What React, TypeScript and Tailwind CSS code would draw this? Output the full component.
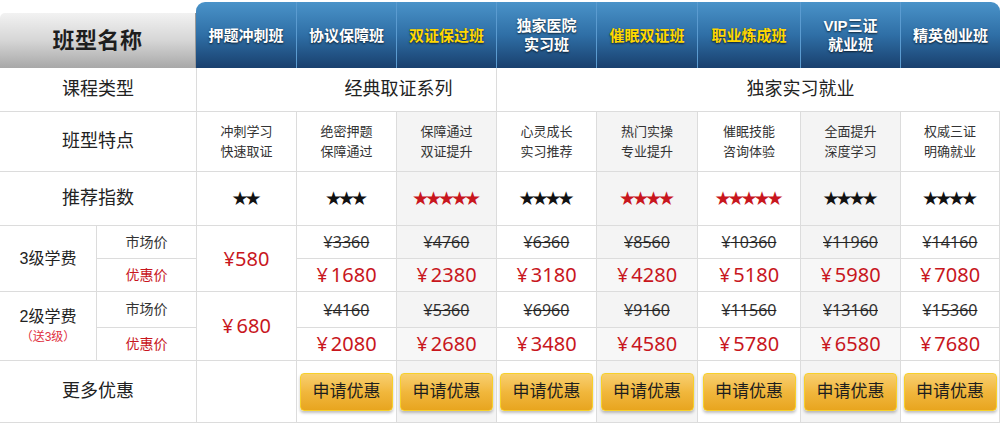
import React from "react";

type Course = {
    name: string[];
    yellow?: boolean;
    feature: string[];
    stars: number;
    redStars?: boolean;
    m3?: string;
    d3?: string;
    m2?: string;
    d2?: string;
    shaded?: boolean;
};

const courses: Course[] = [
    { name: ["押题冲刺班"], feature: ["冲刺学习", "快速取证"], stars: 2 },
    { name: ["协议保障班"], feature: ["绝密押题", "保障通过"], stars: 3, m3: "3360", d3: "1680", m2: "4160", d2: "2080" },
    { name: ["双证保过班"], yellow: true, feature: ["保障通过", "双证提升"], stars: 5, redStars: true, m3: "4760", d3: "2380", m2: "5360", d2: "2680", shaded: true },
    { name: ["独家医院", "实习班"], feature: ["心灵成长", "实习推荐"], stars: 4, m3: "6360", d3: "3180", m2: "6960", d2: "3480" },
    { name: ["催眠双证班"], yellow: true, feature: ["热门实操", "专业提升"], stars: 4, redStars: true, m3: "8560", d3: "4280", m2: "9160", d2: "4580", shaded: true },
    { name: ["职业炼成班"], yellow: true, feature: ["催眠技能", "咨询体验"], stars: 5, redStars: true, m3: "10360", d3: "5180", m2: "11560", d2: "5780" },
    { name: ["VIP三证", "就业班"], feature: ["全面提升", "深度学习"], stars: 4, m3: "11960", d3: "5980", m2: "13160", d2: "6580", shaded: true },
    { name: ["精英创业班"], feature: ["权威三证", "明确就业"], stars: 4, m3: "14160", d3: "7080", m2: "15360", d2: "7680" },
];

const widths = [100, 100, 100, 100, 101, 103, 100, 100];

const cell = "flex items-center justify-center border-r border-b border-[#dcdcdc] text-center";

const Market = ({ v }: { v?: string }) => (
    <span className="text-[16px] text-[#333] line-through decoration-[#222] font-['Noto_Sans','Noto_Sans_CJK_SC',sans-serif]">¥{v}</span>
);

const Deal = ({ v }: { v?: string }) => (
    <span className="text-[20px] text-[#c8161d] font-['Noto_Sans','Noto_Sans_CJK_SC',sans-serif]">
        ¥<span className="ml-[3px]">{v}</span>
    </span>
);

export default function App() {
    return (
        <div className="w-[1000px] h-[424px] bg-white overflow-hidden font-['Liberation_Sans','Noto_Sans_CJK_SC',sans-serif]">
            {/* header */}
            <div className="flex h-[68px]">
                <div className="w-[196px] pt-[13px]">
                    <div className="h-[55px] rounded-tl-[5px] bg-gradient-to-b from-[#f2f2f2] via-[#d6d6d6] to-[#a8a8a8] flex items-center justify-center border-r border-[#999]">
                        <span className="text-[22px] font-bold text-[#1e1e1e] tracking-wide">班型名称</span>
                    </div>
                </div>
                <div className="flex-1 mt-[2px] flex rounded-t-[9px] overflow-hidden bg-gradient-to-b from-[#4a93c9] via-[#2f6fa6] to-[#19406e]">
                    {courses.map((c, i) => (
                        <div
                            key={i}
                            style={{ width: widths[i] }}
                            className={`flex flex-col items-center justify-center text-[15px] font-bold leading-[19px] [text-shadow:0_1px_2px_rgba(0,0,0,0.7)] ${i > 0 ? "border-l border-[#5b9bd0]" : ""} ${c.yellow ? "text-[#ffd800]" : "text-white"}`}
                        >
                            {c.name.map((n) => (
                                <span key={n}>{n}</span>
                            ))}
                        </div>
                    ))}
                </div>
            </div>

            {/* body */}
            <div className="grid grid-cols-[97px_100px_100px_100px_100px_100px_101px_103px_100px_99px] grid-rows-[44px_60px_54px_33px_33px_36px_33px_62px] text-[#222]">
                {/* row: 课程类型 */}
                <div className={`${cell} col-span-2 text-[18px]`}>课程类型</div>
                <div className={`${cell} col-span-3 pl-[104px] text-[18px]`}>经典取证系列</div>
                <div className={`${cell} col-span-5 pl-[104px] text-[18px] border-r-0`}>独家实习就业</div>

                {/* row: 班型特点 */}
                <div className={`${cell} col-span-2 text-[18px]`}>班型特点</div>
                {courses.map((c, i) => (
                    <div key={i} className={`${cell} flex-col text-[13px] leading-[20px] text-[#333] ${c.shaded ? "bg-[#f4f4f4]" : ""}`}>
                        {c.feature.map((f) => (
                            <span key={f}>{f}</span>
                        ))}
                    </div>
                ))}

                {/* row: 推荐指数 */}
                <div className={`${cell} col-span-2 text-[18px]`}>推荐指数</div>
                {courses.map((c, i) => (
                    <div key={i} className={`${cell} ${c.shaded ? "bg-[#f4f4f4]" : ""}`}>
                        <span className={`text-[19px] tracking-[-4px] pr-[4px] font-['DejaVu_Sans',sans-serif] ${c.redStars ? "text-[#c8161d]" : "text-[#111]"}`}>
                            {"★".repeat(c.stars)}
                        </span>
                    </div>
                ))}

                {/* rows: 3级学费 */}
                <div className={`${cell} row-span-2 text-[16px]`}>3级学费</div>
                <div className={`${cell} text-[14px] text-[#333]`}>市场价</div>
                <div className={`${cell} row-span-2`}>
                    <span className="text-[20px] text-[#c8161d] font-['Noto_Sans','Noto_Sans_CJK_SC',sans-serif]">¥580</span>
                </div>
                {courses.slice(1).map((c, i) => (
                    <div key={i} className={`${cell} ${c.shaded ? "bg-[#f4f4f4]" : ""}`}>
                        <Market v={c.m3} />
                    </div>
                ))}
                <div className={`${cell} text-[14px] text-[#c8161d]`}>优惠价</div>
                {courses.slice(1).map((c, i) => (
                    <div key={i} className={`${cell} ${c.shaded ? "bg-[#f7f7f7]" : ""}`}>
                        <Deal v={c.d3} />
                    </div>
                ))}

                {/* rows: 2级学费 */}
                <div className={`${cell} row-span-2 flex-col`}>
                    <span className="text-[16px] leading-[22px]">2级学费</span>
                    <span className="text-[12px] leading-[18px] text-[#e03040]">（送3级）</span>
                </div>
                <div className={`${cell} text-[14px] text-[#333]`}>市场价</div>
                <div className={`${cell} row-span-2`}>
                    <span className="text-[20px] text-[#c8161d] font-['Noto_Sans','Noto_Sans_CJK_SC',sans-serif]">
                        ¥<span className="ml-[3px]">680</span>
                    </span>
                </div>
                {courses.slice(1).map((c, i) => (
                    <div key={i} className={`${cell} ${c.shaded ? "bg-[#f4f4f4]" : ""}`}>
                        <Market v={c.m2} />
                    </div>
                ))}
                <div className={`${cell} text-[14px] text-[#c8161d]`}>优惠价</div>
                {courses.slice(1).map((c, i) => (
                    <div key={i} className={`${cell} ${c.shaded ? "bg-[#f7f7f7]" : ""}`}>
                        <Deal v={c.d2} />
                    </div>
                ))}

                {/* row: 更多优惠 */}
                <div className={`${cell} col-span-2 text-[18px]`}>更多优惠</div>
                <div className={cell} />
                {courses.slice(1).map((c, i) => (
                    <div key={i} className={`${cell} ${c.shaded ? "bg-[#f4f4f4]" : ""}`}>
                        <button className="w-[93px] h-[38px] rounded-[4px] border border-[#f7d02a] bg-gradient-to-b from-[#f8cf6e] via-[#f1b73c] to-[#e8a51e] shadow-[0_2px_3px_rgba(0,0,0,0.25)] text-[17px] text-[#1e1e1e]">
                            申请优惠
                        </button>
                    </div>
                ))}
            </div>
        </div>
    );
}
